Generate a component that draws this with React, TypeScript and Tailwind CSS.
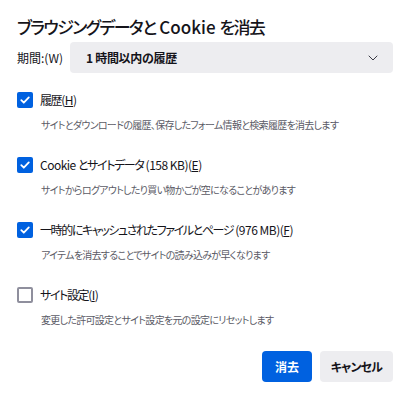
import { ChevronDown } from 'lucide-react';
import type { ReactNode } from 'react';

type Item = {
    label: ReactNode;
    key: string;
    desc: string;
    checked: boolean;
};

// CJK runs are squeezed to match the narrow UI font, Latin runs keep near-normal spacing
const Jp = ({ children }: { children: ReactNode }) => <span className="tracking-[-1.4px]">{children}</span>;

const items: Item[] = [
    { label: <Jp>履歴</Jp>, key: 'H', desc: 'サイトとダウンロードの履歴、保存したフォーム情報と検索履歴を消去します', checked: true },
    {
        label: <>Cookie <Jp>とサイトデータ</Jp> (158 KB)</>,
        key: 'E',
        desc: 'サイトからログアウトしたり買い物かごが空になることがあります',
        checked: true,
    },
    {
        label: <><Jp>一時的にキャッシュされたファイルとページ</Jp> (976 MB)</>,
        key: 'F',
        desc: 'アイテムを消去することでサイトの読み込みが早くなります',
        checked: true,
    },
    { label: <Jp>サイト設定</Jp>, key: 'I', desc: '変更した許可設定とサイト設定を元の設定にリセットします', checked: false },
];

function CheckBox({ checked }: { checked: boolean }) {
    if (checked) {
        return (
            <span className="flex h-4 w-4 shrink-0 items-center justify-center rounded-[2px] bg-[#0061e0]">
                <svg width="12" height="12" viewBox="0 0 12 12" fill="none">
                    <path d="M2.3 6.2 4.8 8.7 9.8 3.4" stroke="white" strokeWidth="1.8" strokeLinecap="round" strokeLinejoin="round" />
                </svg>
            </span>
        );
    }
    return <span className="h-4 w-4 shrink-0 rounded-[2px] border-2 border-[#8f8f9d] bg-white" />;
}

export default function App() {
    return (
        <div
            className="h-[400px] w-[410px] bg-white px-[17px] text-[#15141a] [font-feature-settings:'palt']"
            style={{ fontFamily: '"Noto Sans CJK JP", "Noto Sans", sans-serif' }}
        >
            <h1 className="pt-[15px] text-[17px] leading-6 font-medium">
                <span className="tracking-[-1.6px]">ブラウジングデータと</span> Cookie <span className="tracking-[-1.6px]">を消去</span>
            </h1>

            <div className="mt-[3px] flex items-center">
                <span className="w-[53px] text-[12px]">期間:(W)</span>
                <div className="flex h-[31px] flex-1 items-center justify-between rounded-[4px] bg-[#ededf0] pl-4 pr-3">
                    <span className="text-[12px] font-semibold tracking-[-0.3px]">1 時間以内の履歴</span>
                    <ChevronDown className="h-4 w-4 text-[#3a3a45]" strokeWidth={1.5} />
                </div>
            </div>

            <div className="mt-[19px] flex flex-col gap-6">
                {items.map((item) => (
                    <div key={item.key}>
                        <div className="flex h-4 items-center gap-[7px]">
                            <CheckBox checked={item.checked} />
                            <span className="text-[12px] leading-4 tracking-[-0.5px]">
                                {item.label}(<span className="underline">{item.key}</span>)
                            </span>
                        </div>
                        <p className="mt-[9px] pl-6 text-[10px] leading-4 tracking-[-0.7px] text-[#5b5b66]">{item.desc}</p>
                    </div>
                ))}
            </div>

            <div className="mt-[23px] flex justify-end gap-2">
                <button className="h-[31px] w-[50px] rounded-[4px] bg-[#0061e0] text-[12px] font-semibold text-white">消去</button>
                <button className="h-[31px] w-[73px] rounded-[4px] bg-[#ededf0] text-[12px] font-semibold tracking-[-0.8px]">キャンセル</button>
            </div>
        </div>
    );
}
